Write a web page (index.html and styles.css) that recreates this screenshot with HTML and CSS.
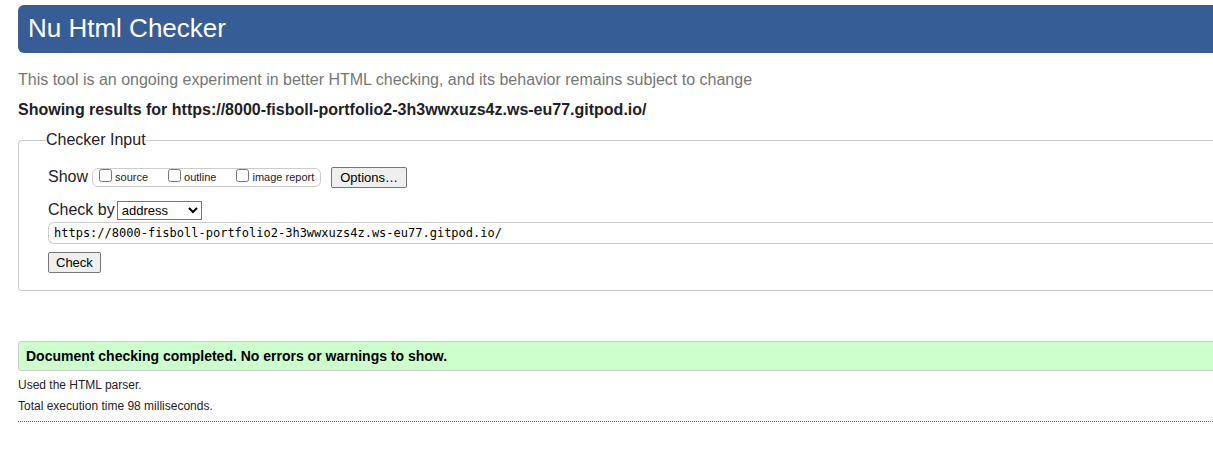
FILE: index.html
```html
<!DOCTYPE html>
<html lang="en">
<head>
<meta charset="utf-8">
<title>Nu Html Checker</title>
<link rel="stylesheet" href="styles.css">
</head>
<body>
<header class="banner"><h1 class="title">Nu Html Checker</h1></header>
<main>
<p class="intro">This tool is an ongoing experiment in better HTML checking, and its behavior remains subject to change</p>
<h2 class="heading">Showing results for https://8000-fisboll-portfolio2-3h3wwxuzs4z.ws-eu77.gitpod.io/</h2>
<form>
<fieldset class="panel">
<legend class="legend">Checker Input</legend>
<div class="row show-row">
<span class="show-label">Show</span>
<div class="checks">
<label class="check"><input type="checkbox">source</label>
<label class="check"><input type="checkbox">outline</label>
<label class="check"><input type="checkbox">image report</label>
</div>
<button class="button options" type="button">Options…</button>
</div>
<div class="row by-row">
<label for="method">Check by</label>
<select class="method" id="method"><option>address</option></select>
</div>
<input class="address" type="url" aria-label="Address" value="https://8000-fisboll-portfolio2-3h3wwxuzs4z.ws-eu77.gitpod.io/">
<button class="button" type="submit">Check</button>
</fieldset>
</form>
<p class="success">Document checking completed. No errors or warnings to show.</p>
<div class="details">
<p class="detail">Used the HTML parser.</p>
<p class="detail">Total execution time 98 milliseconds.</p>
</div>
</main>
</body>
</html>
```
FILE: styles.css
```css
* {
  box-sizing: border-box;
}
body {
  margin: 0;
  padding: 5px 0 28px 18px;
  background: #fff;
  color: #1f2126;
  font: 16px/20px "Liberation Sans", Arial, sans-serif;
}
.banner {
  padding: 8px 10px 10px;
  border-radius: 6px 0 0 6px;
  background: #365d95;
  color: #fff;
}
.title {
  margin: 0;
  font-size: 26px;
  font-weight: 400;
  line-height: 30px;
}
.intro {
  margin: 17px 0 10px;
  color: #767676;
}
.heading {
  margin: 0 0 10px;
  font-size: 16px;
  line-height: 20px;
}
.panel {
  min-width: 0;
  margin: 0;
  padding: 16px 0 17px 29px;
  border: 1px solid #ccc;
  border-right: 0;
  border-radius: 4px 0 0 4px;
}
.legend {
  margin-left: -2px;
  padding: 0;
}
.row {
  display: flex;
  align-items: center;
}
.show-row {
  height: 22px;
  margin-bottom: 12px;
}
.show-label {
  margin-right: 4px;
}
.checks {
  display: flex;
  gap: 20px;
  margin-right: 10px;
  padding: 0 6px;
  border: 1px solid #ccc;
  border-radius: 6px;
  font-size: 11px;
}
.check {
  display: flex;
  align-items: flex-start;
  gap: 3px;
  line-height: 17px;
}
.check input {
  width: 13px;
  height: 13px;
  margin: 0;
}
.button {
  display: block;
  height: 21px;
  padding: 0 7px;
  border: 1px solid #767676;
  border-radius: 2px;
  background: #efefef;
  color: #000;
  font: 13px/19px "Liberation Sans", Arial, sans-serif;
}
.options {
  padding: 0 8px;
}
.by-row {
  gap: 2px;
  margin-bottom: 2px;
}
.method {
  width: 85px;
  height: 19px;
  padding: 0;
  border: 1px solid #767676;
  border-radius: 0;
  background: #fff;
  color: #000;
  font: 13px "Liberation Sans", Arial, sans-serif;
}
.address {
  display: block;
  width: 100%;
  height: 22px;
  margin-bottom: 8px;
  padding: 0 5px;
  border: 1px solid #ccc;
  border-right: 0;
  border-radius: 6px 0 0 6px;
  background: #fff;
  color: #000;
  font: 12px "DejaVu Sans Mono", monospace;
}
.success {
  margin: 50px 0 4px;
  padding: 4px 7px;
  border: 1px solid #ccc;
  border-right: 0;
  border-radius: 4px 0 0 4px;
  background: #cfc;
  color: #000;
  font-size: 14px;
  font-weight: 700;
}
.details {
  padding-bottom: 4px;
  border-bottom: 1px dotted #666;
}
.detail {
  margin: 0;
  font-size: 12px;
  line-height: 21px;
}
```
